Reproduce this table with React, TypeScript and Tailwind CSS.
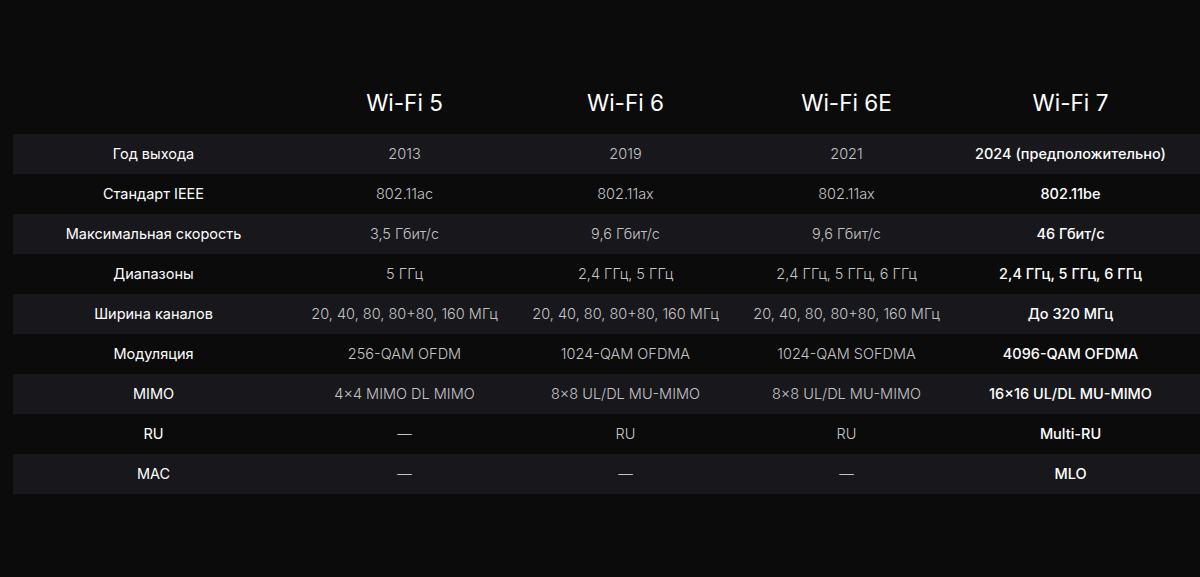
import React from "react";

type Row = {
  label: string;
  values: [string, string, string, string];
};

const columns = ["Wi-Fi 5", "Wi-Fi 6", "Wi-Fi 6E", "Wi-Fi 7"];

const rows: Row[] = [
  { label: "Год выхода", values: ["2013", "2019", "2021", "2024 (предположительно)"] },
  { label: "Стандарт IEEE", values: ["802.11ac", "802.11ax", "802.11ax", "802.11be"] },
  { label: "Максимальная скорость", values: ["3,5 Гбит/с", "9,6 Гбит/с", "9,6 Гбит/с", "46 Гбит/с"] },
  { label: "Диапазоны", values: ["5 ГГц", "2,4 ГГц, 5 ГГц", "2,4 ГГц, 5 ГГц, 6 ГГц", "2,4 ГГц, 5 ГГц, 6 ГГц"] },
  {
    label: "Ширина каналов",
    values: ["20, 40, 80, 80+80, 160 МГц", "20, 40, 80, 80+80, 160 МГц", "20, 40, 80, 80+80, 160 МГц", "До 320 МГц"],
  },
  { label: "Модуляция", values: ["256-QAM OFDM", "1024-QAM OFDMA", "1024-QAM SOFDMA", "4096-QAM OFDMA"] },
  { label: "MIMO", values: ["4×4 MIMO DL MIMO", "8×8 UL/DL MU-MIMO", "8×8 UL/DL MU-MIMO", "16×16 UL/DL MU-MIMO"] },
  { label: "RU", values: ["—", "RU", "RU", "Multi-RU"] },
  { label: "MAC", values: ["—", "—", "—", "MLO"] },
];

const grid = "grid grid-cols-[281px_221px_221px_221px_227px]";

const App: React.FC = () => {
  return (
    <div
      className="w-[1200px] h-[577px] bg-[#0b0b0c] pt-[85px] pl-[13px]"
      style={{ fontFamily: "Inter, 'Noto Sans', sans-serif" }}
    >
      <div className={`${grid} h-[49px] items-start`}>
        <div />
        {columns.map((c) => (
          <div key={c} className="text-center text-[22.5px] leading-[36px] text-white">
            {c}
          </div>
        ))}
      </div>
      {rows.map((row, i) => (
        <div
          key={row.label}
          className={`${grid} h-[40px] items-center text-[14.5px] ${i % 2 === 0 ? "bg-[#18181c]" : ""}`}
        >
          <div className="text-center text-white">{row.label}</div>
          {row.values.map((v, j) => (
            <div
              key={j}
              className={
                j === 3
                  ? "text-center text-white font-medium"
                  : "text-center text-[#c4c4c6] font-light"
              }
            >
              {v}
            </div>
          ))}
        </div>
      ))}
    </div>
  );
};

export default App;
